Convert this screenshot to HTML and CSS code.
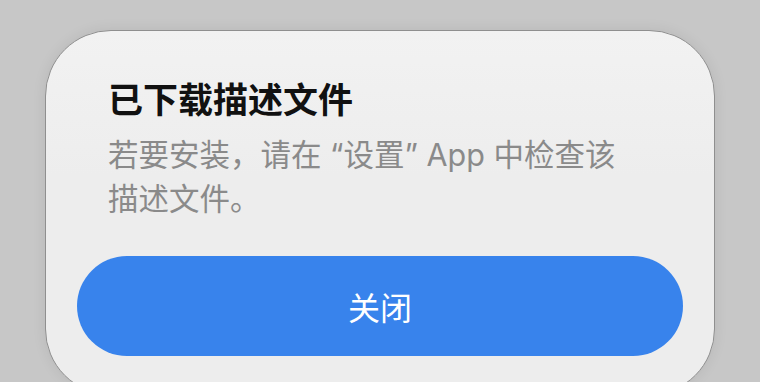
FILE: index.html
```html
<!DOCTYPE html>
<html lang="zh-CN">
<head>
<meta charset="utf-8">
<link rel="stylesheet" href="styles.css">
</head>
<body>
<div class="sheet">
  <h1 class="title">已下载描述文件</h1>
  <p class="message">若要安装，请在 “设置” App 中检查该描述文件。</p>
  <button class="close">关闭</button>
</div>
</body>
</html>
```
FILE: styles.css
```css
html, body {
  margin: 0;
  padding: 0;
  height: 100%;
  overflow: hidden;
}
body {
  background: #c7c7c7;
  font-family: "Inter", "Noto Sans CJK SC", sans-serif;
}
.sheet {
  box-sizing: border-box;
  width: 670px;
  height: 365px;
  margin: 30px auto 0;
  background: linear-gradient(#f2f2f2, #ededed 40%);
  border: 1px solid #8f8f8f;
  border-radius: 66px;
  box-shadow: 0 0 14px rgba(0, 0, 0, 0.08);
  padding: 47px 31px 0;
  display: flex;
  flex-direction: column;
}
.title {
  margin: 0 31px;
  font-size: 35px;
  line-height: 44px;
  font-weight: 600;
  color: #111;
}
.message {
  margin: 11px 31px 0;
  width: 530px;
  font-size: 30.5px;
  line-height: 44px;
  color: #8a8a8a;
}
.close {
  margin-top: 35px;
  height: 100px;
  border: none;
  border-radius: 50px;
  background: #3883ec;
  color: #fff;
  font-family: "Noto Sans CJK SC", sans-serif;
  font-size: 32px;
  font-weight: 400;
}
```
